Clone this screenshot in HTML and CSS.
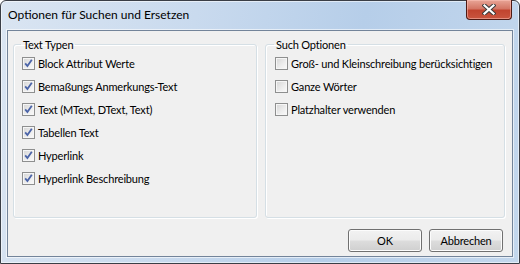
FILE: index.html
```html
<!DOCTYPE html>
<html lang="de">
<head>
    <meta charset="UTF-8">
    <title>Optionen für Suchen und Ersetzen</title>
    <link rel="stylesheet" href="styles.css">
</head>
<body>
    <div class="window">
        <div class="titlebar">
            <span class="title">Optionen für Suchen und Ersetzen</span>
            <button class="close" title="Schließen">
                <svg width="14" height="11" viewBox="0 0 14 11">
                    <path d="M2.5 1.5 L11.5 9.5 M11.5 1.5 L2.5 9.5" stroke="#3b3b3b" stroke-width="4.2" stroke-linecap="square"/>
                    <path d="M2.5 1.5 L11.5 9.5 M11.5 1.5 L2.5 9.5" stroke="#fff" stroke-width="2.2" stroke-linecap="square"/>
                </svg>
            </button>
        </div>
        <div class="client">
            <div class="groups">
                <fieldset class="group group-left">
                    <legend>Text Typen</legend>
                    <label class="check"><span class="box"><svg class="tick" viewBox="0 0 11 11"><path d="M2.2 5.4 L4.4 8 L8.8 1.8"/></svg></span>Block Attribut Werte</label>
                    <label class="check"><span class="box"><svg class="tick" viewBox="0 0 11 11"><path d="M2.2 5.4 L4.4 8 L8.8 1.8"/></svg></span>Bemaßungs Anmerkungs-Text</label>
                    <label class="check"><span class="box"><svg class="tick" viewBox="0 0 11 11"><path d="M2.2 5.4 L4.4 8 L8.8 1.8"/></svg></span>Text (MText, DText, Text)</label>
                    <label class="check"><span class="box"><svg class="tick" viewBox="0 0 11 11"><path d="M2.2 5.4 L4.4 8 L8.8 1.8"/></svg></span>Tabellen Text</label>
                    <label class="check"><span class="box"><svg class="tick" viewBox="0 0 11 11"><path d="M2.2 5.4 L4.4 8 L8.8 1.8"/></svg></span>Hyperlink</label>
                    <label class="check"><span class="box"><svg class="tick" viewBox="0 0 11 11"><path d="M2.2 5.4 L4.4 8 L8.8 1.8"/></svg></span>Hyperlink Beschreibung</label>
                </fieldset>
                <fieldset class="group group-right">
                    <legend>Such Optionen</legend>
                    <label class="check"><span class="box"></span>Groß- und Kleinschreibung berücksichtigen</label>
                    <label class="check"><span class="box"></span>Ganze Wörter</label>
                    <label class="check"><span class="box"></span>Platzhalter verwenden</label>
                </fieldset>
            </div>
            <div class="buttons">
                <button class="btn">OK</button>
                <button class="btn">Abbrechen</button>
            </div>
        </div>
    </div>
</body>
</html>
```
FILE: styles.css
```css
body {
    margin: 0;
    padding: 0;
    background: #fff;
    font-family: Lato, "Noto Sans", sans-serif;
    font-size: 11px;
    letter-spacing: -0.17px;
    color: #000;
}
.window {
    width: 520px;
    height: 264px;
    box-sizing: border-box;
    border: 1px solid #3a3e46;
    border-radius: 6px 6px 0 0;
    padding-bottom: 6px;
    background: linear-gradient(100deg, #dae5f2 0%, #c9daee 35%, #b6cee9 65%, #c3d7ed 100%);
    box-shadow: inset 0 0 0 1px rgba(255, 255, 255, 0.55);
    display: flex;
    flex-direction: column;
}
.titlebar {
    height: 29px;
    display: flex;
    align-items: flex-start;
}
.title {
    padding: 6px 0 0 7px;
    line-height: 15px;
    font-size: 12px;
    letter-spacing: 0;
}
.close {
    margin: -1px 7px 0 auto;
    width: 46px;
    height: 20px;
    border: 1px solid #4e1a14;
    border-top: none;
    border-radius: 0 0 4px 4px;
    background: linear-gradient(#e8a597 0%, #d47665 45%, #c1442f 55%, #c9553f 100%);
    box-shadow: inset 0 0 0 1px rgba(255, 200, 190, 0.5);
    display: flex;
    align-items: center;
    justify-content: center;
    padding: 0;
}
.client {
    flex: 1;
    margin: 0 6px;
    border: 1px solid #73849a;
    box-shadow: 0 0 0 1px rgba(255, 255, 255, 0.6);
    background: #f0f0f0;
    padding: 6px 5px 4px 5px;
    display: flex;
    flex-direction: column;
}
.groups {
    display: flex;
    gap: 8px;
    height: 181px;
}
.group {
    margin: 0;
    padding: 0 8px;
    border: 1px solid #d5dfe5;
    border-radius: 3px;
    box-shadow: inset 1px 1px 0 #fff, 1px 1px 0 #fff;
    min-width: 0;
}
.group-left {
    width: 244px;
    box-sizing: border-box;
}
.group-right {
    width: 240px;
    box-sizing: border-box;
    padding-left: 9px;
}
.group legend {
    padding: 0 2px;
    margin-left: -1px;
    line-height: 15px;
}
.check {
    display: flex;
    align-items: center;
    height: 23px;
    gap: 3px;
    white-space: nowrap;
}
.box {
    width: 13px;
    height: 13px;
    box-sizing: border-box;
    border: 1px solid #8e8f8f;
    background: linear-gradient(135deg, #d5d5d5 0%, #eeeeee 60%, #fafafa 100%);
    box-shadow: inset 0 0 0 1px #f6f6f6;
    flex-shrink: 0;
    display: flex;
}
.tick {
    width: 11px;
    height: 11px;
    fill: none;
    stroke: #4b64a8;
    stroke-width: 1.8;
}
.buttons {
    display: flex;
    justify-content: flex-end;
    gap: 7px;
    margin-top: 11px;
    padding-right: 4px;
}
.btn {
    width: 74px;
    height: 23px;
    padding: 0;
    border: 1px solid #707070;
    border-radius: 3px;
    background: linear-gradient(#f2f2f2 0%, #ebebeb 48%, #dddddd 52%, #cfcfcf 100%);
    box-shadow: inset 0 0 0 1px #fcfcfc;
    font-family: inherit;
    font-size: 11px;
    letter-spacing: -0.17px;
    color: #000;
}
```
